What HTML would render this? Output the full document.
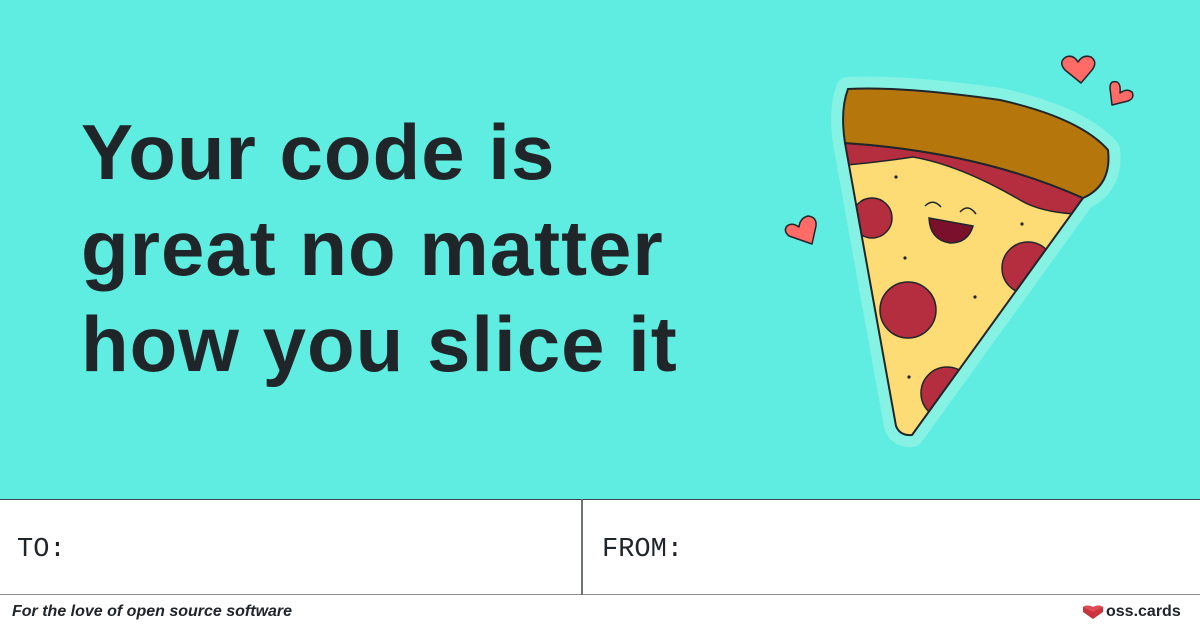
<!DOCTYPE html>
<html><head><style>
html,body{margin:0;padding:0}
body{width:1200px;height:630px;position:relative;overflow:hidden;background:#fff;font-family:"Liberation Sans",sans-serif}
.top{position:absolute;left:0;top:0;width:1200px;height:499px;background:#5eede0}
.h{position:absolute;left:81px;top:104px;font-weight:bold;font-size:78px;line-height:96px;color:#20252a;letter-spacing:1px;margin:0}
.mid{position:absolute;left:0;top:499px;width:1200px;height:96px;border-top:1.5px solid #3c4348;border-bottom:1.5px solid #8c8f92;box-sizing:border-box}
.div{position:absolute;left:581px;top:499px;width:1.5px;height:96px;background:#6e7376}
.lab{position:absolute;top:535px;font-family:"Liberation Mono",monospace;font-size:27px;color:#20252a}
.foot{position:absolute;left:12px;top:603px;font-size:16px;font-style:italic;font-weight:bold;color:#20252a}
.logo{position:absolute;left:1106px;top:603px;font-size:16px;font-weight:bold;color:#20252a}
</style></head><body>
<div class="top"></div>
<div class="h">Your code is<br>great no matter<br>how you slice it</div>
<svg width="1200" height="499" style="position:absolute;left:0;top:0">
<path d="M848 89 Q900 86 1000 100 Q1080 118 1108 150 Q1112 185 1083 198 L912 435 Q900 436 896 426 L845 143 Q840 110 848 89Z" fill="none" stroke="#85f2e3" stroke-width="24" stroke-linejoin="round"/>
<defs><clipPath id="c"><path d="M845 143 Q980 152 1083 198 L912 435 Q900 436 896 426 Z"/></clipPath></defs>
<path d="M845 143 Q980 152 1083 198 L912 435 Q900 436 896 426 Z" fill="#fedc75"/>
<g clip-path="url(#c)" stroke="#20252a" stroke-width="1.5">
<path d="M840 120 L1095 170 L1090 198 L1075 214 Q1040 212 1020 200 Q960 165 913 157 Q880 162 847 165 Z" fill="#b52e3f"/>
<circle cx="872" cy="218" r="20" fill="#b52e3f"/>
<circle cx="1028" cy="268" r="26" fill="#b52e3f"/>
<circle cx="908" cy="310" r="28" fill="#b52e3f"/>
<circle cx="947" cy="393" r="26" fill="#b52e3f"/>
</g>
<path d="M845 143 Q980 152 1083 198 L912 435 Q900 436 896 426 Z" fill="none" stroke="#20252a" stroke-width="2" stroke-linejoin="round"/>
<path d="M848 89 Q900 86 1000 100 Q1080 118 1108 150 Q1112 185 1083 198 Q980 152 845 143 Q840 110 848 89Z" fill="#b5770c" stroke="#20252a" stroke-width="2"/>
<g fill="#20252a"><circle cx="896" cy="177" r="1.6"/><circle cx="1022" cy="224" r="1.6"/><circle cx="905" cy="258" r="1.6"/><circle cx="975" cy="297" r="1.6"/><circle cx="909" cy="377" r="1.6"/></g>
<path d="M925 206 Q933 198 941 207 M960 212 Q968 203 976 214" fill="none" stroke="#20252a" stroke-width="1.5"/>
<path d="M929 218 L973 226 Q968 243 950 243 Q930 240 929 218Z" fill="#7a102c" stroke="#20252a" stroke-width="1.5"/>
<g fill="#ff6b66" stroke="#20252a" stroke-width="1.5" stroke-linejoin="round">
<path d="M1081 83 L1065 70 Q1058 62 1066 57 Q1073 54 1078 62 Q1083 54 1091 57 Q1098 62 1092 70Z"/>
<path d="M1112 105 L1110 88 Q1110 80 1117 82 Q1121 84 1120 93 Q1127 88 1132 92 Q1135 98 1128 101Z"/>
<path d="M812 244 L789 236 Q783 231 787 226 Q792 222 799 227 Q800 218 808 216 Q817 217 816 226Z"/>
</g>
</svg>
<div class="mid"></div>
<div class="div"></div>
<div class="lab" style="left:17px">TO:</div>
<div class="lab" style="left:602px">FROM:</div>
<div class="foot">For the love of open source software</div>
<svg width="22" height="16" style="position:absolute;left:1082px;top:604px"><path d="M11 15 L1 8 L1 3 Q5 0 11 3 Q17 0 21 3 L21 8Z" fill="#c9343f"/><path d="M1 3 Q5 0 11 3 Q17 0 21 3 L11 8Z" fill="#e04a55"/></svg>
<div class="logo">oss.cards</div>
</body></html>
